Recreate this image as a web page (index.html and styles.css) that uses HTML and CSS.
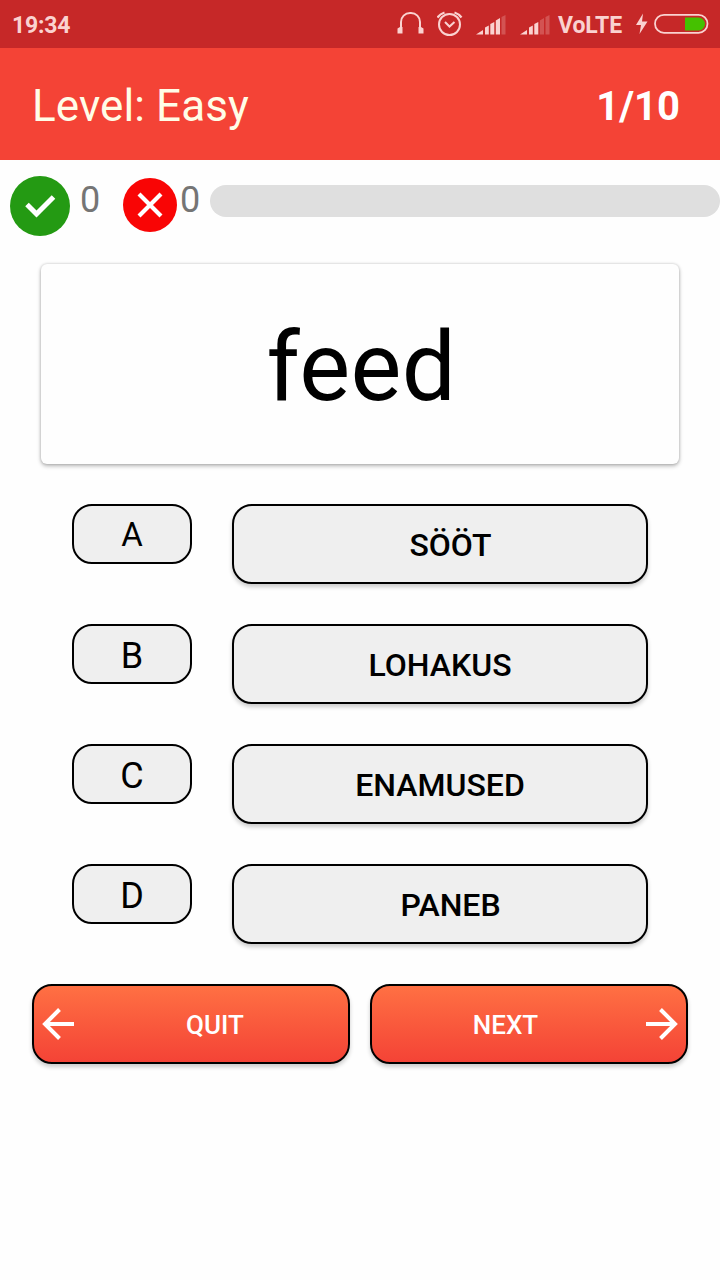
FILE: index.html
```html
<!DOCTYPE html>
<html lang="et">
<head>
  <meta charset="UTF-8">
  <title>Level: Easy</title>
  <link rel="stylesheet" href="styles.css">
</head>
<body>
  <!-- Status bar -->
  <div class="status-bar">
    <span class="clock">19:34</span>
    <div class="status-icons">
      <svg class="headphones" width="28" height="26" viewBox="0 0 28 26">
        <path d="M4 17V11A9 9 0 0 1 13 2H14A9 9 0 0 1 23 11V17" fill="none" stroke="#fad2d0" stroke-width="2"/>
        <path d="M.5 17.500L3 16H5.500V22.500H.5ZM26.500 17.500L24 16H21.500V22.500H26.500Z" fill="#fad2d0"/>
      </svg>
      <svg class="alarm" width="26" height="26" viewBox="0 0 26 26" fill="none" stroke="#fad2d0" stroke-width="2">
        <circle cx="12.500" cy="13.500" r="10.500"/>
        <path d="M8 11L12.500 15.500L17.500 11"/>
        <path d="M.5 6.500Q3 3 7.500 1.500M24.500 6.500Q22 3 17.500 1.500" stroke-width="2.200"/>
      </svg>
      <svg class="signal" width="32" height="22" viewBox="0 0 32 22" fill="#fad2d0">
        <path d="M0 20.500L7 16V20.500ZM9 13.500L12.800 11.500V20.500H9ZM14.300 10L18.300 8V20.500H14.300ZM19.800 6.500L24 4V20.500H19.800Z"/>
        <path d="M25.500 3L29.500 1V20.500H25.500Z" opacity=".25"/>
      </svg>
      <svg class="signal" width="32" height="22" viewBox="0 0 32 22" fill="#fad2d0">
        <path d="M0 20.500L7 16V20.500ZM9 13.500L12.800 11.500V20.500H9ZM14.300 10L18.300 8V20.500H14.300Z"/>
        <path d="M19.800 6.500L24 4V20.500H19.800ZM25.500 3L29.500 1V20.500H25.500Z" opacity=".25"/>
      </svg>
      <span class="network">VoLTE</span>
      <svg class="bolt" width="14" height="22" viewBox="0 0 14 22">
        <path d="M8 .5L1 12H6L4.500 21L12.500 8.500H7Z" fill="#fad2d0"/>
      </svg>
      <svg class="battery" width="56" height="22" viewBox="0 0 56 22">
        <path d="M31 4.500H44.500A6.500 6.500 0 0 1 44.500 17.500H31Z" fill="#45c100"/>
        <rect x="1" y="1.800" width="52.500" height="18" rx="9" fill="none" stroke="#fad2d0" stroke-width="1.800"/>
      </svg>
    </div>
  </div>

  <!-- Title -->
  <header class="toolbar">
    <h1>Level: Easy</h1>
    <span class="counter">1/10</span>
  </header>

  <!-- Right and wrong answers, progress -->
  <div class="score">
    <svg class="right-icon" width="60" height="60" viewBox="0 0 60 60">
      <circle cx="30" cy="30" r="30" fill="#249a13"/>
      <path d="M17 28.500L26.500 38L43.500 21" fill="none" stroke="#fff" stroke-width="5"/>
    </svg>
    <span class="right-count">0</span>
    <svg class="wrong-icon" width="56" height="56" viewBox="0 0 56 56">
      <circle cx="28" cy="28" r="27" fill="#f90505"/>
      <path d="M17 17L39 39M39 17L17 39" stroke="#fff" stroke-width="4.200"/>
    </svg>
    <span class="wrong-count">0</span>
    <div class="progress"></div>
  </div>

  <div class="word-card">feed</div>

  <!-- Answers -->
  <div class="answers">
    <div class="answer">
      <span class="letter letter-small">A</span>
      <button class="option option-short">SÖÖT</button>
    </div>
    <div class="answer">
      <span class="letter">B</span>
      <button class="option">LOHAKUS</button>
    </div>
    <div class="answer">
      <span class="letter">C</span>
      <button class="option">ENAMUSED</button>
    </div>
    <div class="answer">
      <span class="letter">D</span>
      <button class="option option-short">PANEB</button>
    </div>
  </div>

  <!-- Navigation -->
  <div class="nav">
    <button class="nav-button quit">
      <svg width="34" height="34" viewBox="0 0 34 34" fill="none" stroke="#fff" stroke-width="4">
        <path d="M33 17H4M18.500 2.500L4 17L18.500 31.500"/>
      </svg>
      <span>QUIT</span>
    </button>
    <button class="nav-button next">
      <span>NEXT</span>
      <svg width="34" height="34" viewBox="0 0 34 34" fill="none" stroke="#fff" stroke-width="4">
        <path d="M1 17H30M15.500 2.500L30 17L15.500 31.500"/>
      </svg>
    </button>
  </div>
</body>
</html>
```
FILE: styles.css
```css
* {
  box-sizing: border-box;
}

body {
  margin: 0;
  min-height: 100vh;
  background-color: #fefefe;
  color: black;
  font-family: Roboto, sans-serif;
}

/* Status bar */
.status-bar {
  display: flex;
  justify-content: space-between;
  align-items: center;
  height: 48px;
  padding: 0 10px 0 12px;
  background-color: #c62828;
  color: #fad2d0;
  font-weight: bold;
}

.clock {
  font-size: 23px;
  letter-spacing: -0.2px;
  padding-top: 2px;
}

.status-icons {
  display: flex;
  align-items: center;
}

.alarm {
  margin-left: 12px;
}

.signal {
  margin: 2px 0 0 13px;
}

.signal + .signal {
  margin-left: 12px;
}

.network {
  width: 65px;
  font-size: 23px;
  letter-spacing: -0.1px;
  margin-left: 6px;
  padding-top: 2px;
}

.bolt {
  margin-left: 12px;
}

.battery {
  margin-left: 5px;
}

/* Title bar */
.toolbar {
  display: flex;
  justify-content: space-between;
  align-items: center;
  height: 112px;
  padding: 4px 40px 0 32px;
  background-color: #f44336;
}

.toolbar h1 {
  margin: 0;
  color: #fffde7;
  font-size: 44px;
  font-weight: normal;
  letter-spacing: 0.1px;
}

.counter {
  color: white;
  font-size: 40px;
  font-weight: bold;
}

/* Score row */
.score {
  display: flex;
  align-items: flex-start;
  height: 104px;
  padding: 16px 0 0 10px;
  color: #757575;
  font-size: 36px;
  line-height: 48px;
}

.right-count {
  width: 42px;
  margin-left: 10px;
}

.wrong-icon {
  margin-top: 1px;
}

.wrong-count {
  width: 30px;
  margin-left: 2px;
}

.progress {
  flex: 1;
  height: 32px;
  margin-top: 9px;
  border-radius: 16px;
  background-color: #dfdfdf;
}

/* Word to translate */
.word-card {
  display: flex;
  justify-content: center;
  align-items: center;
  height: 200px;
  margin: 0 41px;
  padding: 6px 0 0 3px;
  border-radius: 6px;
  background-color: #fefefe;
  box-shadow: 0 2px 4px rgba(0, 0, 0, 0.28), 0 0 3px rgba(0, 0, 0, 0.18);
  font-size: 96px;
  letter-spacing: 0.4px;
}

/* Answers */
.answers {
  display: flex;
  flex-direction: column;
  gap: 40px;
  padding: 40px 72px;
}

.answer {
  display: flex;
  align-items: flex-start;
  gap: 40px;
}

.letter {
  width: 120px;
  height: 60px;
  border: 2px solid black;
  border-radius: 20px;
  background-color: #efefef;
  font-size: 36px;
  line-height: 61px;
  text-align: center;
}

.letter-small {
  font-size: 33px;
  line-height: 58px;
}

button {
  padding: 0;
  border: 2px solid black;
  border-radius: 20px;
  font-family: inherit;
  font-weight: 500;
  box-shadow: 0 3px 4px rgba(0, 0, 0, 0.2);
}

.option {
  flex: 1;
  height: 80px;
  padding-top: 2px;
  background-color: #efefef;
  color: black;
  font-size: 32px;
}

/* Short words sit a little to the right */
.option-short {
  padding-left: 21px;
}

/* Quit and next */
.nav {
  display: flex;
  gap: 20px;
  padding: 0 32px;
}

.nav-button {
  display: flex;
  flex: 1;
  align-items: center;
  height: 80px;
  padding: 0 7px;
  background: linear-gradient(#ff7043, #f44336);
  color: white;
  font-size: 26px;
}

.nav-button span {
  flex: 1;
  padding-top: 2px;
  text-align: center;
}

.quit span {
  padding-left: 14px;
}

.next span {
  padding-right: 13px;
}
```
